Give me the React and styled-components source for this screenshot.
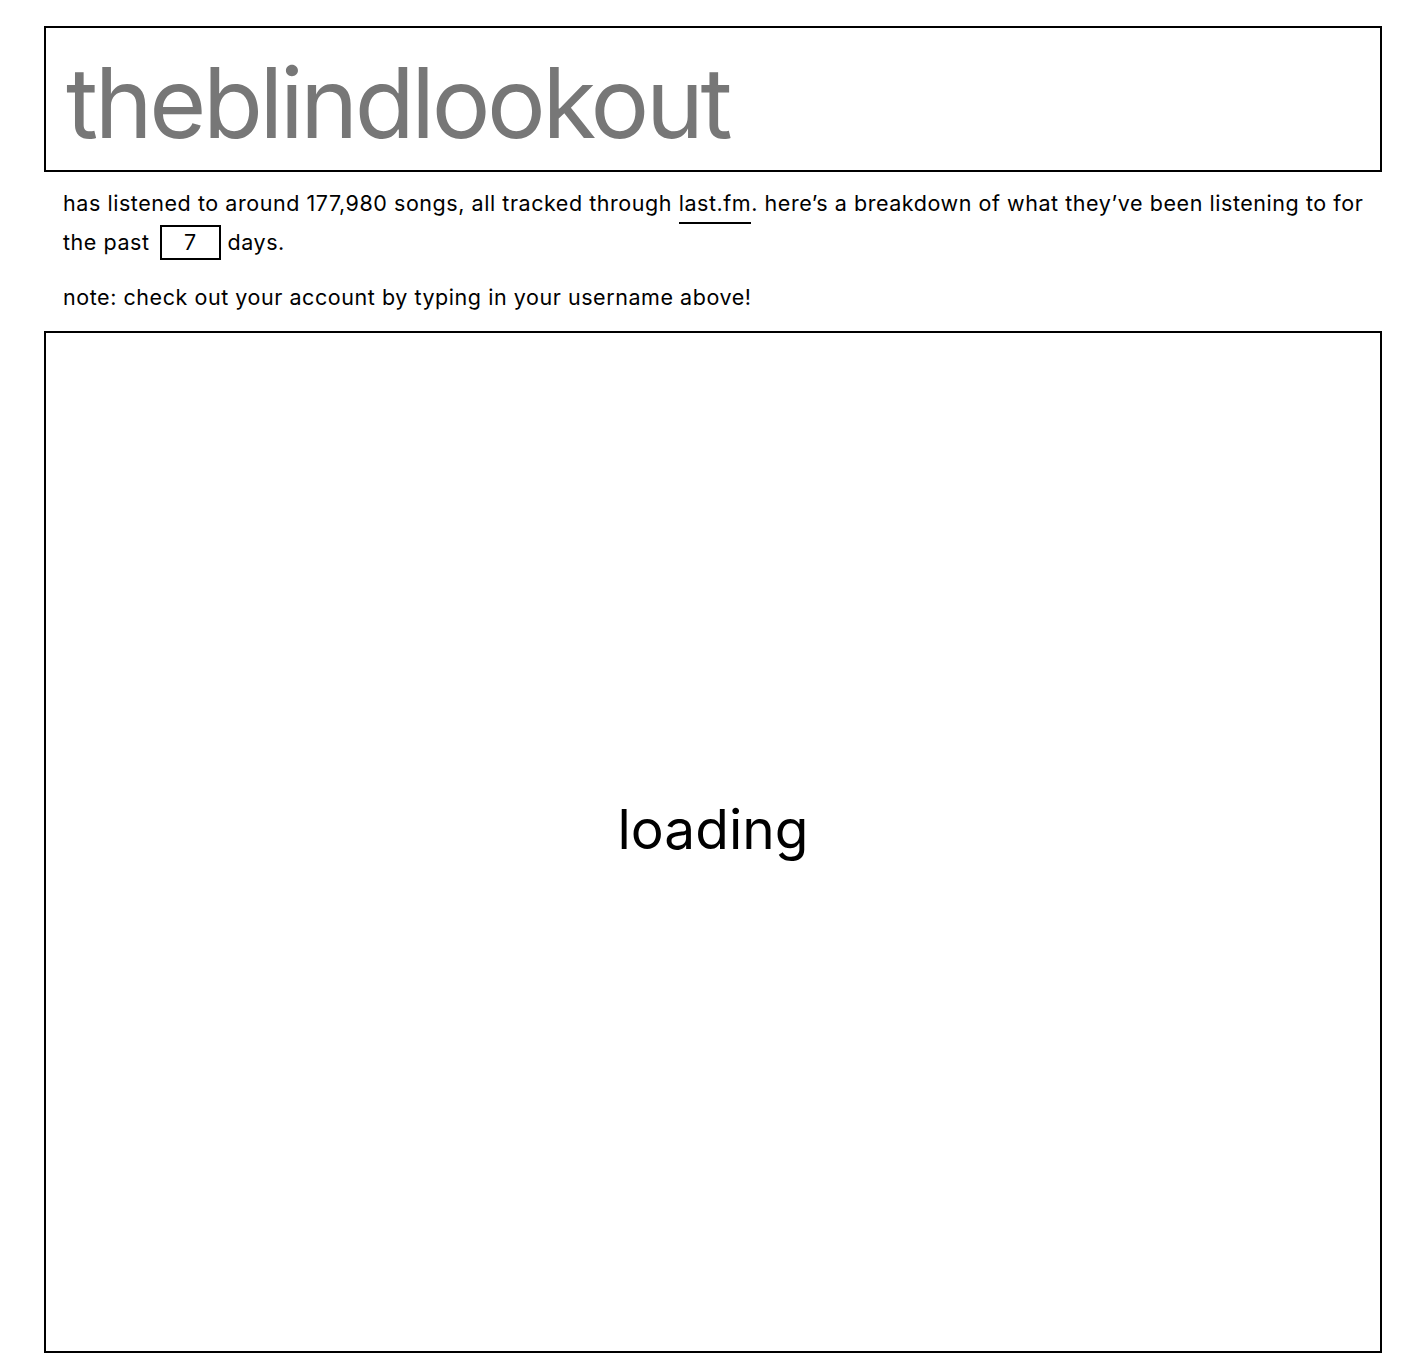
import React from 'react'
import styled, { createGlobalStyle } from 'styled-components'

const GlobalStyle = createGlobalStyle`
  body {
    margin: 0;
    background: #fff;
    font-family: Inter, "Noto Sans", sans-serif;
    color: #000;
  }
`;

const Page = styled.div`
  padding: 26px 46px 18px 44px;
  display: flex;
  flex-direction: column;
`;

const UserInput = styled.input`
  box-sizing: border-box;
  width: 100%;
  height: 146px;
  border: 2px solid #000;
  padding: 6px 20px 0;
  font-family: Inter, sans-serif;
  font-size: 98px;
  letter-spacing: -3.4px;
  color: #777;
  outline: none;
  background: #fff;
`;

const Blurb = styled.div`
  padding: 0 10px 0 19px;
  font-size: 21.5px;
  letter-spacing: 0.55px;
  line-height: 39px;
`;

const Line = styled.p`
  margin: ${p => p.$top || 0}px 0 0;
`;

const Link = styled.a`
  color: inherit;
  text-decoration: none;
  border-bottom: 2px solid #000;
  padding-bottom: 6px;
`;

const DaysInput = styled.input`
  box-sizing: border-box;
  width: 61px;
  height: 35px;
  border: 2px solid #000;
  margin: 0 7px 0 10px;
  font-family: inherit;
  font-size: 21.5px;
  text-align: center;
  vertical-align: middle;
  position: relative;
  top: -2px;
`;

const LoadingBox = styled.div`
  box-sizing: border-box;
  margin-top: 14px;
  height: 1022px;
  border: 2px solid #000;
  display: flex;
  align-items: center;
  justify-content: center;
  font-size: 55px;
  padding-bottom: 26px;
`;

export default function App() {
  return (
    <>
      <GlobalStyle />
      <Page>
        <UserInput defaultValue="theblindlookout" />
        <Blurb>
          <Line $top={12}>
            has listened to around 177,980 songs, all tracked through <Link href="#">last.fm</Link>. here’s a breakdown of what they’ve been listening to for the past
            <DaysInput defaultValue="7" />
            days.
          </Line>
          <Line $top={16}>note: check out your account by typing in your username above!</Line>
        </Blurb>
        <LoadingBox>loading</LoadingBox>
      </Page>
    </>
  )
}
